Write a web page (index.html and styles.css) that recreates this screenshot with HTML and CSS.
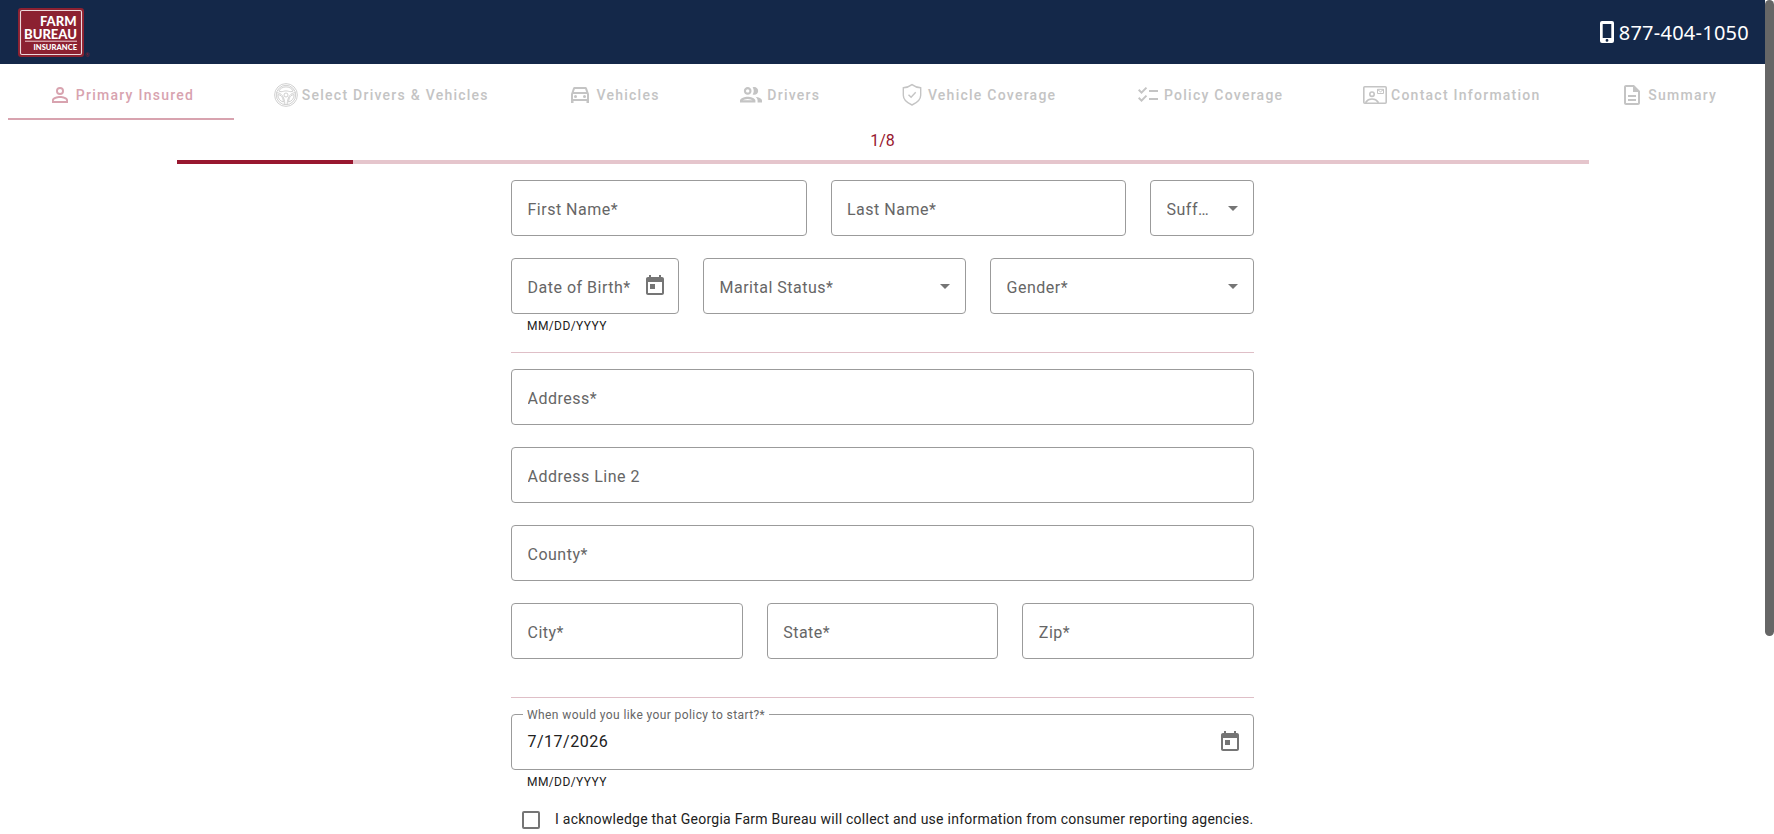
FILE: index.html
```html
<!DOCTYPE html>
<html lang="en">
<head>
	<meta charset="UTF-8">
	<meta name="viewport" content="width=device-width, initial-scale=1.0">
	<title>Farm Bureau Insurance</title>
	<link rel="stylesheet" href="styles.css">
</head>
<body>
<div class="page">
	<header class="header">
		<svg class="logo" width="74" height="52" viewBox="0 0 74 52">
			<rect x="1" y="1" width="66" height="49" rx="3" fill="#8c2131"/>
			<rect x="3.5" y="3.5" width="61" height="44" rx="1.5" fill="none" stroke="#ecd9dc" stroke-width="1.1"/>
			<text x="23" y="18.500" textLength="36.5" lengthAdjust="spacingAndGlyphs" font-size="14">FARM</text>
			<text x="7" y="31.500" textLength="53" lengthAdjust="spacingAndGlyphs" font-size="14">BUREAU</text>
			<rect x="8" y="33.600" width="52" height="1.300" fill="#dba9b0"/>
			<text x="16.500" y="42.500" textLength="43.500" lengthAdjust="spacingAndGlyphs" font-size="8">INSURANCE</text>
			<text class="reg" x="68" y="50" font-size="5.500">®</text>
		</svg>
		<a class="phone">
			<svg width="14" height="22" viewBox="0 0 14 22"><path fill="#fff" fill-rule="evenodd" d="M2 0h10a2 2 0 0 1 2 2v18a2 2 0 0 1-2 2H2a2 2 0 0 1-2-2V2a2 2 0 0 1 2-2zm.7 3v14h8.600V3zM7 18a1.400 1.400 0 1 0 0 2.800A1.400 1.400 0 0 0 7 18z"/></svg>
			<span>877-404-1050</span>
		</a>
	</header>

	<nav class="tabs">
		<div class="tab active">
			<svg viewBox="0 0 24 24"><path d="M12 5.900a2.100 2.100 0 1 1 0 4.200 2.100 2.100 0 0 1 0-4.200m0 9c2.970 0 6.100 1.460 6.100 2.100v1.100H5.900V17c0-.64 3.130-2.100 6.100-2.100M12 4a4 4 0 1 0 0 8 4 4 0 0 0 0-8zm0 9c-2.670 0-8 1.340-8 4v3h16v-3c0-2.660-5.330-4-8-4z"/></svg>
			<span>Primary Insured</span>
		</div>
		<div class="tab">
			<svg class="line" viewBox="0 0 24 24">
				<circle cx="12" cy="12" r="11.400"/>
				<circle cx="12" cy="12" r="9.700"/>
				<circle cx="12" cy="12" r="2"/>
				<path d="M4.800 8C6.200 5.300 8.800 3.900 12 3.900S17.800 5.300 19.200 8c-1.500.9-3.200.8-4.700.3-1.600-.5-3.400-.5-5 0-1.500.5-3.200.6-4.700-.3z"/>
				<path d="M3.800 11.600c3.200.2 5.300 2.500 5.600 7.400-3.300-.8-5.500-3.500-5.600-7.400zM20.200 11.600c-3.200.2-5.300 2.500-5.600 7.400 3.300-.8 5.500-3.500 5.600-7.400z"/>
				<path d="M2.600 9.800c4.300-.2 7.800 3.400 8.300 11.600M21.400 9.800c-4.300-.2-7.800 3.400-8.300 11.600"/>
			</svg>
			<span>Select Drivers &amp; Vehicles</span>
		</div>
		<div class="tab">
			<svg viewBox="0 0 24 24"><path d="M18.920 5.010C18.720 4.420 18.160 4 17.500 4h-11c-.66 0-1.210.42-1.420 1.010L3 11v9h2.500v-2h13v2H21v-9l-2.080-5.990zM6.850 6h10.290l1.040 3H5.810l1.040-3zM19 16H5v-5h14v5z"/><circle cx="7.500" cy="13.500" r="1.500"/><circle cx="16.500" cy="13.500" r="1.500"/></svg>
			<span>Vehicles</span>
		</div>
		<div class="tab">
			<svg viewBox="0 0 24 24"><path d="M9 13.750c-2.340 0-7 1.170-7 3.500V19h14v-1.750c0-2.330-4.660-3.500-7-3.500zM4.340 17c.84-.58 2.870-1.250 4.660-1.250s3.820.67 4.660 1.250H4.340zM9 12c1.930 0 3.500-1.570 3.500-3.500S10.930 5 9 5 5.500 6.570 5.500 8.500 7.070 12 9 12zm0-5c.83 0 1.500.67 1.500 1.500S9.830 10 9 10s-1.500-.67-1.500-1.500S8.170 7 9 7zm7.040 6.810c1.160.84 1.960 1.960 1.960 3.440V19h4v-1.750c0-2.020-3.500-3.170-5.960-3.440zM15 12c1.930 0 3.500-1.570 3.500-3.500S16.930 5 15 5c-.54 0-1.040.13-1.500.35.63.89 1 1.980 1 3.150s-.37 2.260-1 3.150c.46.22.96.35 1.500.35z" transform="translate(-1.200 -1.400) scale(1.100)"/></svg>
			<span>Drivers</span>
		</div>
		<div class="tab">
			<svg class="line shield" viewBox="0 0 24 24"><path d="M12 1.600c2.600 2 5.500 2.900 8.700 3.200v7.400c0 4.400-3.600 7.500-8.700 9.800-5.100-2.300-8.700-5.400-8.700-9.800V4.800c3.200-.3 6.100-1.200 8.700-3.200zM8.500 11.700l2.600 2.600 4.600-5"/></svg>
			<span>Vehicle Coverage</span>
		</div>
		<div class="tab">
			<svg viewBox="0 0 24 24"><path d="M22 7h-9v2h9V7zm0 8h-9v2h9v-2zM5.540 11L2 7.460l1.410-1.410 2.120 2.120 4.240-4.240 1.410 1.410L5.540 11zm0 8L2 15.460l1.410-1.410 2.120 2.120 4.240-4.240 1.410 1.410L5.540 19z"/></svg>
			<span>Policy Coverage</span>
		</div>
		<div class="tab">
			<svg class="line contact" viewBox="0 0 24 24">
				<rect x=".8" y="3.800" width="22.400" height="16.400" rx="1"/>
				<circle cx="9" cy="11.200" r="2.200"/>
				<path d="M3 20v-1c1.200-2 3.500-3 6-3s4.800 1 6 3v1"/>
				<path class="thin" d="M14.500 6.300h6v4.200h-6zM14.500 6.500l3 2.300 3-2.300"/>
			</svg>
			<span>Contact Information</span>
		</div>
		<div class="tab">
			<svg viewBox="0 0 24 24"><path d="M8 16h8v2H8zm0-4h8v2H8zm6-10H6c-1.100 0-2 .9-2 2v16c0 1.100.89 2 1.990 2H18c1.100 0 2-.9 2-2V8l-6-6zm4 18H6V4h7v5h5v11z"/></svg>
			<span>Summary</span>
		</div>
	</nav>

	<div class="steps">1/8</div>
	<div class="progress"><div class="bar" style="width: 12.5%"></div></div>

	<form class="form">
		<div class="row name">
			<div class="field"><label>First Name*</label></div>
			<div class="field"><label>Last Name*</label></div>
			<div class="field select suffix"><label>Suffix</label><svg viewBox="0 0 24 24"><path d="M7 10l5 5 5-5z"/></svg></div>
		</div>
		<div class="row personal">
			<div class="group">
				<div class="field date">
					<label>Date of Birth*</label>
					<svg viewBox="0 0 24 24"><path d="M19 3h-1V1h-2v2H8V1H6v2H5c-1.110 0-2 .9-2 2v14c0 1.100.89 2 2 2h14c1.100 0 2-.9 2-2V5c0-1.100-.9-2-2-2zm0 16H5V8h14v11zM7 10h5v5H7z"/></svg>
				</div>
				<div class="hint">MM/DD/YYYY</div>
			</div>
			<div class="field select"><label>Marital Status*</label><svg viewBox="0 0 24 24"><path d="M7 10l5 5 5-5z"/></svg></div>
			<div class="field select"><label>Gender*</label><svg viewBox="0 0 24 24"><path d="M7 10l5 5 5-5z"/></svg></div>
		</div>
		<hr>
		<div class="row"><div class="field"><label>Address*</label></div></div>
		<div class="row"><div class="field"><label>Address Line 2</label></div></div>
		<div class="row"><div class="field"><label>County*</label></div></div>
		<div class="row city">
			<div class="field"><label>City*</label></div>
			<div class="field"><label>State*</label></div>
			<div class="field"><label>Zip*</label></div>
		</div>
		<hr>
		<div class="group">
			<div class="field date filled">
				<label>When would you like your policy to start?*</label>
				<span class="value">7/17/2026</span>
				<svg viewBox="0 0 24 24"><path d="M19 3h-1V1h-2v2H8V1H6v2H5c-1.110 0-2 .9-2 2v14c0 1.100.89 2 2 2h14c1.100 0 2-.9 2-2V5c0-1.100-.9-2-2-2zm0 16H5V8h14v11zM7 10h5v5H7z"/></svg>
			</div>
			<div class="hint">MM/DD/YYYY</div>
		</div>
		<div class="ack">
			<span class="checkbox"></span>
			<span class="ackText">I acknowledge that Georgia Farm Bureau will collect and use information from consumer reporting agencies.</span>
		</div>
	</form>
</div>
<div class="scrollbar"></div>
</body>
</html>
```

FILE: styles.css
```css
* {
	box-sizing: border-box;
}

body {
	margin: 0;
	height: 100vh;
	overflow: hidden;
	background-color: #fff;
	font-family: Roboto, Arial, sans-serif;
}

.page {
	width: calc(100% - 9px);
}

.scrollbar {
	position: fixed;
	top: 0;
	right: 0;
	width: 9px;
	height: 636px;
	border-radius: 5px;
	background-color: #666;
}

.header {
	display: flex;
	align-items: center;
	justify-content: space-between;
	height: 64px;
	padding: 0 16px 0 17px;
	background-color: #142849;
}

.logo {
	margin-top: 2px;
}

.logo text {
	fill: #fff;
	font-family: Lato, sans-serif;
	font-weight: 900;
}

.logo .reg {
	fill: #8c2131;
	font-weight: 400;
}

.phone {
	display: flex;
	align-items: center;
	gap: 5px;
	color: #fff;
	font-family: "Noto Sans", sans-serif;
	font-size: 20px;
	letter-spacing: 0.25px;
}

/* step tabs */
.tabs {
	display: flex;
	height: 56px;
	padding: 8px 8px 0;
}

.tab {
	flex: 1 1 auto;
	display: flex;
	align-items: center;
	justify-content: center;
	gap: 4px;
	color: #c4c4c4;
	font-size: 14px;
	font-weight: 500;
	letter-spacing: 1.25px;
	white-space: nowrap;
	border-bottom: 2px solid transparent;
}

.tab.active {
	color: #d8a3af;
	border-bottom-color: #d8a3af;
}

.tab svg {
	width: 24px;
	height: 24px;
	fill: currentColor;
}

.tab svg.line {
	fill: none;
	stroke: currentColor;
	stroke-width: 0.8;
}

.tab svg.shield {
	stroke-width: 1.4;
}

.tab svg.contact {
	stroke-width: 1.6;
}

.tab svg .thin {
	stroke-width: 1;
}

.steps {
	height: 40px;
	padding-top: 9px;
	color: #98172f;
	font-size: 16px;
	line-height: 24px;
	text-align: center;
}

.progress {
	width: 80%;
	height: 4px;
	margin: 0 auto;
	background-color: #e5c5cc;
}

.progress .bar {
	height: 4px;
	background-color: #98172f;
}

/* form */
.form {
	width: 743px;
	margin: 16px auto 0;
}

.row {
	display: grid;
	gap: 24px;
	margin-bottom: 22px;
}

.row.name {
	grid-template-columns: 1fr 1fr 104px;
}

.row.personal {
	grid-template-columns: 168px 263px 1fr;
	margin-bottom: 18px;
}

.row.city {
	grid-template-columns: repeat(3, 1fr);
	margin-bottom: 38px;
}

.field {
	display: flex;
	align-items: center;
	justify-content: space-between;
	min-width: 0;
	height: 56px;
	padding: 0 11px 0 15.5px;
	border: 1px solid #9b9b9b;
	border-radius: 4px;
	color: #666;
	font-size: 16px;
	letter-spacing: 0.5px;
}

.field label {
	overflow: hidden;
	text-overflow: ellipsis;
	white-space: nowrap;
	line-height: 24px;
	padding-top: 4px;
}

.field svg {
	flex: none;
	width: 24px;
	height: 24px;
	fill: #757575;
}

.field.select {
	padding-right: 8px;
}

.field.suffix label {
	width: 44px;
}

.field.filled {
	position: relative;
}

.field.filled label {
	position: absolute;
	top: -10px;
	left: 11px;
	padding: 0 4px;
	background-color: #fff;
	font-size: 12px;
	line-height: 20px;
	letter-spacing: 0.4px;
}

.field .value {
	padding-bottom: 2px;
	color: #212121;
}

.hint {
	height: 20px;
	padding-left: 16px;
	color: #212121;
	font-size: 12px;
	line-height: 24px;
	letter-spacing: 0.4px;
}

hr {
	height: 1px;
	margin: 0 0 16px;
	border: 0;
	background-color: #dfbfc7;
}

.ack {
	display: flex;
	align-items: center;
	gap: 15px;
	height: 40px;
	margin-top: 10px;
	padding-left: 11px;
	color: #212121;
	font-size: 14px;
	letter-spacing: 0.25px;
	white-space: nowrap;
}

.ackText {
	padding-bottom: 2px;
}

.checkbox {
	width: 18px;
	height: 18px;
	border: 2px solid #757575;
	border-radius: 2px;
}
```
